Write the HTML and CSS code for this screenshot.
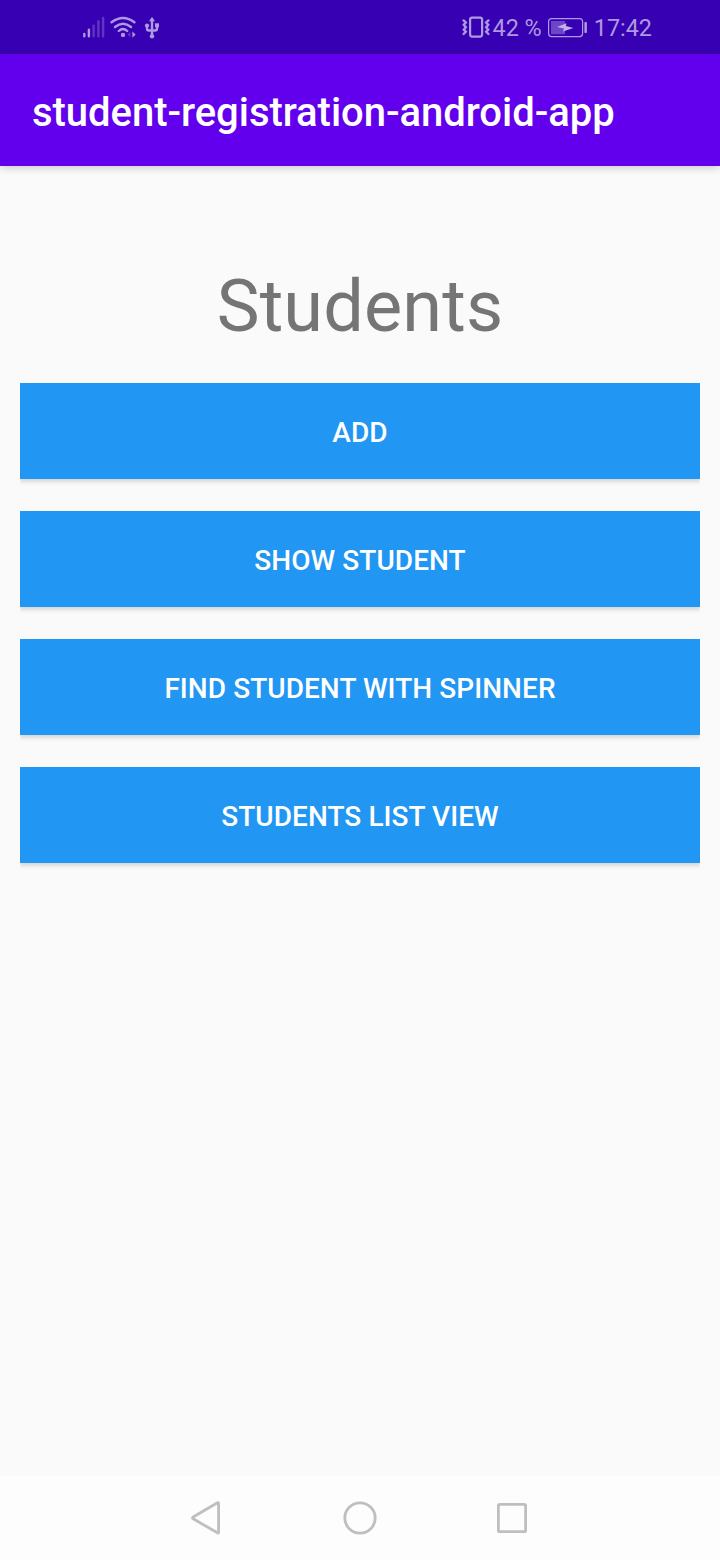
FILE: index.html
```html
<!DOCTYPE html>
<html lang="en">
<head>
<meta charset="utf-8">
<title>student-registration-android-app</title>
<link rel="stylesheet" href="styles.css">
</head>
<body>
<div class="screen">
  <div class="status-bar">
    <div class="status-group">
      <svg class="signal" width="23" height="28" viewBox="82 13 23 28">
        <path d="M84.3 34V36.3M88.9 29.8V36.3"/>
        <path d="M93.6 25.8V36.3M98.4 21.3V36.3M103.1 18V36.3" opacity=".35"/>
      </svg>
      <svg class="wifi" width="27" height="28" viewBox="110 13 27 28">
        <path d="M111.6 22.3Q123 13.7 134.4 22.3M115 27Q123 20.3 131 27M118.8 31Q123 27 127.2 31"/>
        <circle cx="123" cy="34.9" r="2.2"/>
        <path class="solid" d="M132.4 31.4L135.6 34.6L132.4 37.8Z"/>
        <path class="solid" d="M130.5 32L127.5 34.6L130.5 37.3Z" opacity=".35"/>
      </svg>
      <svg class="usb" width="16" height="28" viewBox="144 13 16 28">
        <path d="M152 19V35M147 26V28.5Q147 30.5 149 30.5H155Q157 30.5 157 28.5V26"/>
        <path class="solid" d="M152 17L155 21.3H149Z"/>
        <circle cx="152" cy="36.2" r="2.2"/>
        <circle cx="147" cy="25.6" r="2.1"/>
        <rect x="155" y="23.3" width="4" height="4"/>
      </svg>
    </div>
    <div class="status-group">
      <svg class="vibrate" width="29" height="28" viewBox="462 13 29 28">
        <rect class="line" x="470.1" y="17.6" width="12" height="19" rx="2"/>
        <path d="M463.6 20.4L465.8 22.5L463.8 24.8L465.8 27.2L463.8 29.6L465.8 31.8L463.6 34M488.4 20.4L486.2 22.5L488.2 24.8L486.2 27.2L488.2 29.6L486.2 31.8L488.4 34"/>
      </svg>
      <span class="battery-level">42 %</span>
      <svg class="battery" width="40" height="28" viewBox="548 13 40 28">
        <rect class="line" x="548.6" y="18.6" width="34" height="18" rx="3"/>
        <rect x="551" y="21" width="14" height="13.2" opacity=".45"/>
        <rect x="584.4" y="22" width="2.5" height="11" rx=".8"/>
        <path class="bolt" d="M557 27L566.4 23.2L566 26.1L573.3 28L563 31.6L564 28.6Z"/>
      </svg>
      <span class="clock">17:42</span>
    </div>
  </div>
  <header class="app-bar">student-registration-android-app</header>
  <main class="content">
    <h1 class="heading">Students</h1>
    <div class="actions">
      <button class="action">ADD</button>
      <button class="action">SHOW STUDENT</button>
      <button class="action">FIND STUDENT WITH SPINNER</button>
      <button class="action">STUDENTS LIST VIEW</button>
    </div>
  </main>
  <nav class="nav-bar">
    <svg width="36" height="36" viewBox="188 1500 36 36"><path d="M217.4 1502.8Q218.6 1502.2 218.6 1503.5V1532.2Q218.6 1533.5 217.4 1532.8L193.2 1518.8Q191.8 1517.9 193.2 1517Z"/></svg>
    <svg width="38" height="36" viewBox="341 1500 38 36"><circle cx="360" cy="1518" r="15.2"/></svg>
    <svg width="34" height="36" viewBox="496 1500 34 36"><rect x="498.4" y="1504.4" width="27.2" height="27.2" rx="1.2"/></svg>
  </nav>
</div>
</body>
</html>
```
FILE: styles.css
```css
body {
  margin: 0;
  font-family: Roboto, sans-serif;
}

.screen {
  display: flex;
  flex-direction: column;
  height: 1560px;
  background: #fafafa;
}

.status-bar {
  display: flex;
  justify-content: space-between;
  height: 54px;
  padding: 0 68px 0 82px;
  box-sizing: border-box;
  background: #3700b3;
  color: #af99e1;
  font-size: 23.4px;
}

.status-group {
  display: flex;
  align-items: center;
}

.status-group span {
  padding-top: 2px;
}

.status-group svg {
  display: block;
  fill: #af99e1;
}

.status-group path {
  fill: none;
  stroke: #af99e1;
  stroke-width: 2.4;
  stroke-linecap: round;
}

.status-group .solid {
  fill: #af99e1;
  stroke: none;
}

.status-group .bolt {
  fill: #c3b2e9;
  stroke: none;
}

.status-group .line {
  fill: none;
  stroke: #af99e1;
  stroke-width: 2.2;
}

.status-group .battery .line {
  stroke-width: 1.2;
}

.wifi {
  margin-left: 5px;
}

.usb {
  margin-left: 7px;
}

.battery-level {
  margin-left: 2px;
}

.battery {
  margin-left: 6px;
}

.clock {
  margin-left: 6px;
}

.app-bar {
  display: flex;
  align-items: center;
  height: 112px;
  padding: 5px 32px 0;
  box-sizing: border-box;
  background: #6200ee;
  box-shadow: 0 2px 8px rgba(0, 0, 0, 0.18);
  color: #fff;
  font-size: 40px;
  font-weight: 500;
  letter-spacing: -0.04px;
}

.content {
  flex: 1;
  padding: 93px 20px 0;
}

.heading {
  margin: 0;
  height: 124px;
  line-height: 96px;
  color: #757575;
  font-size: 72px;
  font-weight: 400;
  letter-spacing: 0.15px;
  text-align: center;
}

.actions {
  display: flex;
  flex-direction: column;
  gap: 32px;
}

.action {
  height: 96px;
  padding: 2px 0 0;
  border: 0;
  background: #2196f3;
  box-shadow: 0 3px 4px rgba(0, 0, 0, 0.14);
  clip-path: inset(-2px 0 -10px);
  color: #fff;
  font-family: inherit;
  font-size: 28px;
  font-weight: 500;
  letter-spacing: 0.06px;
}

.nav-bar {
  display: flex;
  justify-content: space-between;
  align-items: center;
  height: 84px;
  padding: 0 190px 0 188px;
  background: #fdfdfd;
}

.nav-bar svg {
  display: block;
  fill: none;
  stroke: #bfbfbf;
  stroke-width: 2.8;
}
```
